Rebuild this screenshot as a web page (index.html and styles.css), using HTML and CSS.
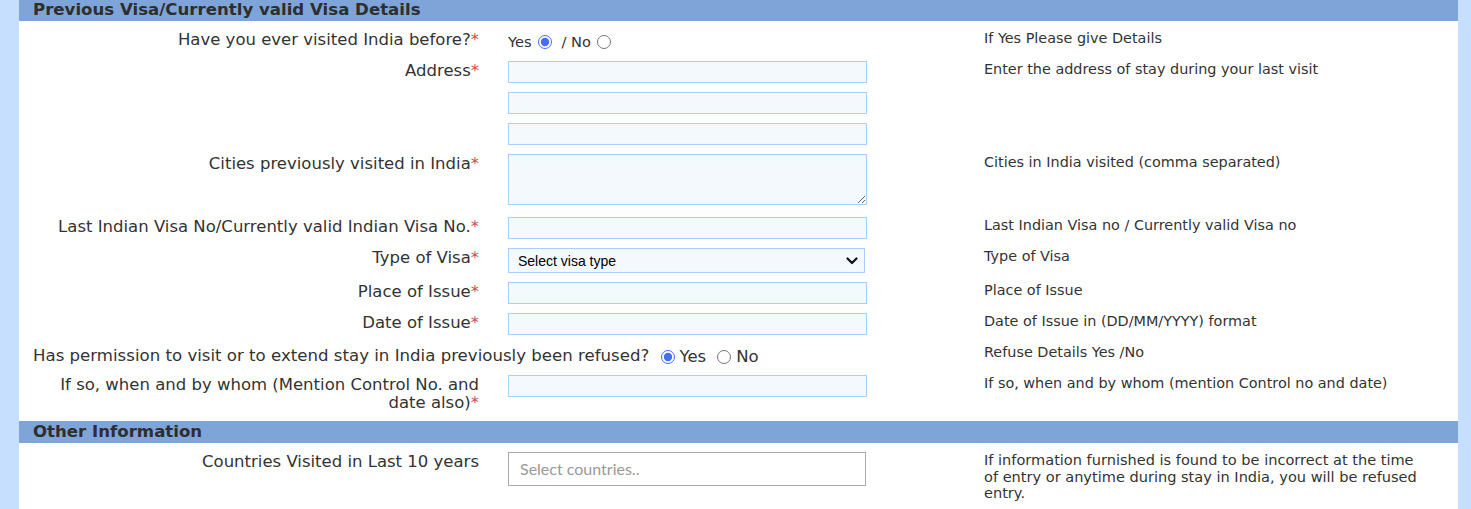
FILE: index.html
```html
<!DOCTYPE html>
<html lang="en">
<head>
<meta charset="utf-8">
<title>Visa Details</title>
<link rel="stylesheet" href="styles.css">
</head>
<body>
<div class="panel">
  <div class="section-head first">Previous Visa/Currently valid Visa Details</div>
  <div class="form-grid">
    <div class="lbl">Have you ever visited India before?<span class="req">*</span></div>
    <div class="fld radios small">
      <label>Yes <input type="radio" name="visited" checked></label>
      <label>/ No <input type="radio" name="visited"></label>
    </div>
    <div class="help">If Yes Please give Details</div>

    <div class="lbl">Address<span class="req">*</span></div>
    <div class="fld"><input class="txt" type="text"></div>
    <div class="help">Enter the address of stay during your last visit</div>

    <div class="lbl"></div>
    <div class="fld"><input class="txt" type="text"></div>
    <div class="help"></div>

    <div class="lbl"></div>
    <div class="fld"><input class="txt" type="text"></div>
    <div class="help"></div>

    <div class="lbl">Cities previously visited in India<span class="req">*</span></div>
    <div class="fld"><textarea class="area"></textarea></div>
    <div class="help">Cities in India visited (comma separated)</div>

    <div class="lbl">Last Indian Visa No/Currently valid Indian Visa No.<span class="req">*</span></div>
    <div class="fld"><input class="txt" type="text"></div>
    <div class="help">Last Indian Visa no / Currently valid Visa no</div>

    <div class="lbl">Type of Visa<span class="req">*</span></div>
    <div class="fld">
      <div class="sel-wrap">
        <select class="sel"><option>Select visa type</option></select>
        <svg class="chev" width="12" height="8" viewBox="0 0 12 8" aria-hidden="true"><path d="M1.5 1.5 L6 6 L10.5 1.5" fill="none" stroke="#111" stroke-width="2.2" stroke-linecap="round" stroke-linejoin="round"/></svg>
      </div>
    </div>
    <div class="help">Type of Visa</div>

    <div class="lbl">Place of Issue<span class="req">*</span></div>
    <div class="fld"><input class="txt" type="text"></div>
    <div class="help">Place of Issue</div>

    <div class="lbl">Date of Issue<span class="req">*</span></div>
    <div class="fld"><input class="txt" type="text"></div>
    <div class="help">Date of Issue in (DD/MM/YYYY) format</div>

    <div class="wide">Has permission to visit or to extend stay in India previously been refused?
      <span class="radios big">
        <label><input type="radio" name="refused" checked>Yes</label>
        <label><input type="radio" name="refused">No</label>
      </span>
    </div>
    <div class="help">Refuse Details Yes /No</div>

    <div class="lbl">If so, when and by whom (Mention Control No. and date also)<span class="req">*</span></div>
    <div class="fld"><input class="txt" type="text"></div>
    <div class="help">If so, when and by whom (mention Control no and date)</div>
  </div>

  <div class="section-head">Other Information</div>
  <div class="form-grid">
    <div class="lbl">Countries Visited in Last 10 years</div>
    <div class="fld"><div class="chosen">Select countries..</div></div>
    <div class="help long">If information furnished is found to be incorrect at the time of entry or anytime during stay in India, you will be refused entry.</div>
  </div>
</div>
</body>
</html>
```
FILE: styles.css
```css
html, body {
  margin: 0;
  padding: 0;
}
body {
  background: #c6dfff;
  font-family: "DejaVu Sans", Verdana, sans-serif;
  color: #333;
  height: 509px;
  overflow: hidden;
}
.panel {
  margin: -1px 13px 0 19px;
  background: #fff;
  min-height: 520px;
}
.section-head {
  background: #7fa4d7;
  height: 22px;
  line-height: 22px;
  padding-left: 14px;
  font-weight: bold;
  font-size: 16.6px;
  color: #2e2e2e;
}
.form-grid {
  display: grid;
  grid-template-columns: 461px 504px 1fr;
  row-gap: 9px;
  padding: 7px 0 9px;
}
.section-head + .form-grid {
  padding-top: 9px;
}
.lbl {
  text-align: right;
  font-size: 16.5px;
  line-height: 18px;
  padding: 1px 1px 0 30px;
}
.req {
  color: #c0504d;
}
.fld {
  padding-left: 28px;
}
.help {
  font-size: 14.4px;
  line-height: 16.5px;
  padding: 0 30px 0 0;
}
.help.long {
  font-size: 14.55px;
  padding-right: 32px;
}
.txt {
  display: block;
  box-sizing: border-box;
  width: 359px;
  height: 22px;
  margin: 0;
  border: 1px solid #a8d0ff;
  background: #f4f9fe;
  outline: none;
}
.area {
  display: block;
  box-sizing: border-box;
  width: 359px;
  height: 51px;
  margin: 0 0 3px;
  border: 1px solid #a8d0ff;
  background: #f4f9fe;
  outline: none;
}
.sel-wrap {
  position: relative;
  width: 357px;
}
.sel {
  display: block;
  box-sizing: border-box;
  width: 357px;
  height: 25px;
  margin: 0;
  padding: 0 9px;
  border: 1px solid #a8d0ff;
  border-radius: 0;
  background-color: #f4f9fe;
  font-family: "Liberation Sans", Arial, sans-serif;
  font-size: 14px;
  color: #000;
  appearance: none;
  -webkit-appearance: none;
}
.chev {
  position: absolute;
  right: 7px;
  top: 9px;
  pointer-events: none;
}
.radios {
  display: flex;
  align-items: center;
  gap: 10px;
}
.radios label {
  display: flex;
  align-items: center;
}
.radios input {
  margin: 0 0 0 6px;
  width: 14px;
  height: 14px;
  accent-color: #4470f0;
}
.radios.small {
  box-sizing: border-box;
  height: 22px;
  font-size: 14.6px;
  padding-top: 1px;
}
.radios.big {
  display: inline-flex;
  font-size: 16.5px;
  gap: 11px;
  margin-left: 6px;
  vertical-align: middle;
}
.radios.big input {
  margin: 0 5px 0 0;
}
.wide {
  grid-column: 1 / 3;
  padding: 3px 0 0 14px;
  font-size: 16.6px;
  line-height: 18px;
  height: 19px;
}
.chosen {
  box-sizing: border-box;
  width: 358px;
  height: 34px;
  border: 1px solid #aaa;
  background: #fff;
  padding: 0 11px;
  line-height: 32px;
  font-family: Lato, "Open Sans", sans-serif;
  font-size: 16px;
  color: #999;
}
```
